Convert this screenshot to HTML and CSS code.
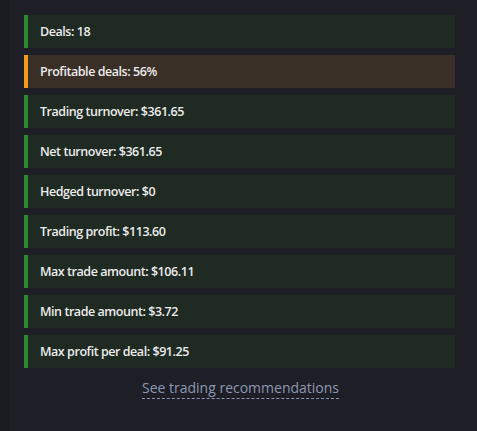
FILE: index.html
```html
<!DOCTYPE html>
<html>
<head>
<meta charset="utf-8">
<link rel="stylesheet" href="styles.css">
</head>
<body>
<div class="page">
  <div class="panel">
    <ul class="stats">
      <li class="stat">Deals: 18</li>
      <li class="stat stat--warn">Profitable deals: 56%</li>
      <li class="stat">Trading turnover: $361.65</li>
      <li class="stat">Net turnover: $361.65</li>
      <li class="stat">Hedged turnover: $0</li>
      <li class="stat">Trading profit: $113.60</li>
      <li class="stat">Max trade amount: $106.11</li>
      <li class="stat">Min trade amount: $3.72</li>
      <li class="stat">Max profit per deal: $91.25</li>
    </ul>
    <div class="more"><a class="more-link" href="#">See trading recommendations</a></div>
  </div>
</div>
</body>
</html>
```
FILE: styles.css
```css
html, body {
  margin: 0;
  padding: 0;
  background: #1a1b20;
  height: 100%;
}
.page {
  display: flex;
  height: 431px;
  font-family: "Open Sans", "Noto Sans", sans-serif;
}
.panel {
  margin-left: 9px;
  flex: 1;
  background: #1e1f26;
  padding: 15px 22px 0 15px;
}
.stats {
  list-style: none;
  margin: 0;
  padding: 0;
  display: flex;
  flex-direction: column;
  gap: 7px;
}
.stat {
  height: 33px;
  box-sizing: border-box;
  display: flex;
  align-items: center;
  padding-left: 12px;
  border-left: 4px solid #2d8a2e;
  background: #1f2a23;
  color: #ececec;
  font-size: 12.5px;
  font-weight: 600;
  letter-spacing: -0.45px;
}
.stat--warn {
  border-left-color: #f39c1c;
  background: #3a2f27;
}
.more {
  display: flex;
  justify-content: center;
  margin-top: 9px;
  padding-left: 2px;
}
.more-link {
  color: #8d97b3;
  font-size: 14px;
  text-decoration: none;
  border-bottom: 1px dashed #8d97b3;
  line-height: 21px;
}
```
